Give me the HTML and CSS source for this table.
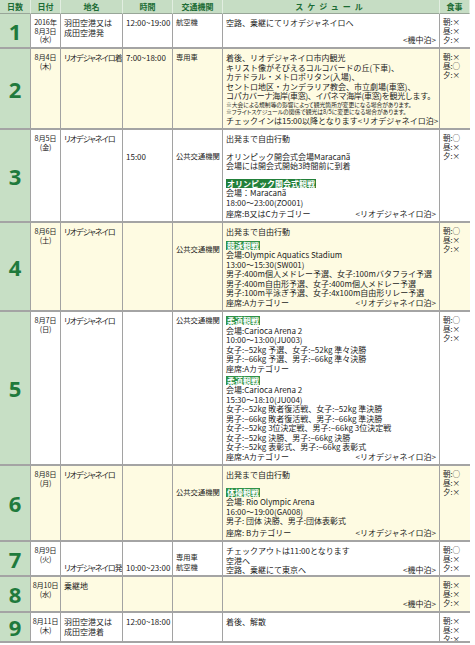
FILE: index.html
```html
<!DOCTYPE html>
<html lang="ja">
<head>
<meta charset="utf-8">
<title>スケジュール</title>
<link rel="stylesheet" href="styles.css">
</head>
<body>
<div class="sched">
  <div class="row head">
    <div class="c h">日数</div>
    <div class="c h">日付</div>
    <div class="c h">地名</div>
    <div class="c h">時間</div>
    <div class="c h">交通機関</div>
    <div class="c h sp">スケジュール</div>
    <div class="c h">食事</div>
  </div>

  <div class="row">
    <div class="c day">1</div>
    <div class="c date">2016年<br>8月3日<br>(水)</div>
    <div class="c place">羽田空港又は<br>成田空港発</div>
    <div class="c time">12:00~19:00</div>
    <div class="c trans">航空機</div>
    <div class="c plan">
      <div>空路、乗継にてリオデジャネイロへ</div>
      <div class="stay"><span></span><span>&lt;機中泊&gt;</span></div>
    </div>
    <div class="c meal">朝:×<br>昼:×<br>夕:×</div>
  </div>

  <div class="row alt">
    <div class="c day">2</div>
    <div class="c date">8月4日<br>(木)</div>
    <div class="c place"><span><span class="kana">リオデジャネイロ</span>着</span></div>
    <div class="c time">7:00~18:00</div>
    <div class="c trans">専用車</div>
    <div class="c plan">
      <div>着後、リオデジャネイロ市内観光</div>
      <div>キリスト像がそびえるコルコバードの丘(下車)、</div>
      <div>カテドラル・メトロポリタン(入場)、</div>
      <div>セントロ地区・カンデラリア教会、市立劇場(車窓)、</div>
      <div class="tight">コパカバーナ海岸(車窓)、イパネマ海岸(車窓)を観光します。</div>
      <div class="note">※大会による規制等の影響によって観光箇所が変更になる場合があります。</div>
      <div class="note">※フライトスケジュールの関係で観光は8/5に変更になる場合があります。</div>
      <div class="stay"><span>チェックインは15:00以降となります</span><span>&lt;リオデジャネイロ泊&gt;</span></div>
    </div>
    <div class="c meal">朝:×<br>昼:○<br>夕:×</div>
  </div>

  <div class="row">
    <div class="c day">3</div>
    <div class="c date">8月5日<br>(金)</div>
    <div class="c place"><span class="kana">リオデジャネイロ</span></div>
    <div class="c time at3">15:00</div>
    <div class="c trans at3">公共交通機関</div>
    <div class="c plan">
      <div>出発まで自由行動</div>
      <div class="gap"></div>
      <div>オリンピック開会式会場Maracanã</div>
      <div>会場には開会式開始3時間前に到着</div>
      <div class="gap"></div>
      <div><span class="tag">オリンピック開会式観戦</span></div>
      <div>会場：Maracanã</div>
      <div>18:00～23:00(ZO001)</div>
      <div class="stay"><span>座席:B又はCカテゴリー</span><span>&lt;リオデジャネイロ泊&gt;</span></div>
    </div>
    <div class="c meal">朝:○<br>昼:×<br>夕:×</div>
  </div>

  <div class="row alt">
    <div class="c day">4</div>
    <div class="c date">8月6日<br>(土)</div>
    <div class="c place"><span class="kana">リオデジャネイロ</span></div>
    <div class="c time"></div>
    <div class="c trans at3">公共交通機関</div>
    <div class="c plan">
      <div>出発まで自由行動</div>
      <div class="gap"></div>
      <div><span class="tag lt">競泳観戦</span></div>
      <div>会場:Olympic Aquatics Stadium</div>
      <div>13:00～15:30(SW001)</div>
      <div>男子:400m個人メドレー予選、女子:100mバタフライ予選</div>
      <div>男子:400m自由形予選、女子:400m個人メドレー予選</div>
      <div>男子:100m平泳ぎ予選、女子:4x100m自由形リレー予選</div>
      <div class="stay"><span>座席:Aカテゴリー</span><span>&lt;リオデジャネイロ泊&gt;</span></div>
    </div>
    <div class="c meal">朝:○<br>昼:×<br>夕:×</div>
  </div>

  <div class="row">
    <div class="c day">5</div>
    <div class="c date">8月7日<br>(日)</div>
    <div class="c place"><span class="kana">リオデジャネイロ</span></div>
    <div class="c time"></div>
    <div class="c trans">公共交通機関</div>
    <div class="c plan">
      <div><span class="tag lt">柔道観戦</span></div>
      <div>会場:Carioca Arena 2</div>
      <div>10:00～13:00(JU003)</div>
      <div>女子:−52kg 予選、女子:−52kg 準々決勝</div>
      <div>男子:−66kg 予選、男子:−66kg 準々決勝</div>
      <div>座席:Aカテゴリー</div>
      <div class="gap"></div>
      <div><span class="tag lt">柔道観戦</span></div>
      <div>会場:Carioca Arena 2</div>
      <div>15:30～18:10(JU004)</div>
      <div>女子:−52kg 敗者復活戦、女子:−52kg 準決勝</div>
      <div>男子:−66kg 敗者復活戦、男子:−66kg 準決勝</div>
      <div>女子:−52kg 3位決定戦、男子:−66kg 3位決定戦</div>
      <div>女子:−52kg 決勝、男子:−66kg 決勝</div>
      <div>女子:−52kg 表彰式、男子:−66kg 表彰式</div>
      <div class="stay"><span>座席:Aカテゴリー</span><span>&lt;リオデジャネイロ泊&gt;</span></div>
    </div>
    <div class="c meal">朝:○<br>昼:×<br>夕:×</div>
  </div>

  <div class="row alt">
    <div class="c day">6</div>
    <div class="c date">8月8日<br>(月)</div>
    <div class="c place"><span class="kana">リオデジャネイロ</span></div>
    <div class="c time"></div>
    <div class="c trans at3">公共交通機関</div>
    <div class="c plan">
      <div>出発まで自由行動</div>
      <div class="gap"></div>
      <div><span class="tag lt">体操観戦</span></div>
      <div>会場: Rio Olympic Arena</div>
      <div>16:00～19:00(GA008)</div>
      <div>男子: 団体 決勝、男子:団体表彰式</div>
      <div class="stay"><span>座席: Bカテゴリー</span><span>&lt;リオデジャネイロ泊&gt;</span></div>
    </div>
    <div class="c meal">朝:○<br>昼:×<br>夕:×</div>
  </div>

  <div class="row">
    <div class="c day">7</div>
    <div class="c date">8月9日<br>(火)</div>
    <div class="c place bottom"><span><span class="kana">リオデジャネイロ</span>発</span></div>
    <div class="c time bottom">10:00~23:00</div>
    <div class="c trans bottom">専用車<br>航空機</div>
    <div class="c plan">
      <div>チェックアウトは11:00となります</div>
      <div>空港へ</div>
      <div class="stay"><span>空路、乗継にて東京へ</span><span>&lt;機中泊&gt;</span></div>
    </div>
    <div class="c meal">朝:○<br>昼:×<br>夕:×</div>
  </div>

  <div class="row alt">
    <div class="c day">8</div>
    <div class="c date">8月10日<br>(水)</div>
    <div class="c place">乗継地</div>
    <div class="c time"></div>
    <div class="c trans"></div>
    <div class="c plan">
      <div class="stay"><span></span><span>&lt;機中泊&gt;</span></div>
    </div>
    <div class="c meal">朝:×<br>昼:×<br>夕:×</div>
  </div>

  <div class="row">
    <div class="c day">9</div>
    <div class="c date">8月11日<br>(木)</div>
    <div class="c place">羽田空港又は<br>成田空港着</div>
    <div class="c time">12:00~18:00</div>
    <div class="c trans"></div>
    <div class="c plan">
      <div>着後、解散</div>
    </div>
    <div class="c meal">朝:×<br>昼:×<br>夕:×</div>
  </div>
</div>
</body>
</html>
```

FILE: styles.css
```css
* {
  box-sizing: border-box;
  margin: 0;
  padding: 0;
}

body {
  margin: 0;
  background: #ffffff;
  font-family: "Noto Sans CJK JP", "Noto Sans", sans-serif;
  font-size: 8px;
  line-height: 9.5px;
  color: #1c1c1c;
}

.sched {
  display: grid;
  width: 470px;
  grid-template-columns: 31px 30px 62px 50px 50px 217px 30px;
  grid-template-rows: 14px 35px 81px 93px 89px 154px 76px 35px 36px 30px;
}

.row {
  display: contents;
}

.c {
  display: flex;
  flex-direction: column;
  padding: 4px 3px 3px;
  border-right: 1px solid #a2a2a2;
  border-bottom: 2px solid #a4a4a4;
  background: #ffffff;
  white-space: nowrap;
  overflow: hidden;
}

.row > .c:last-child {
  border-right: 0;
}

.row.alt > .c {
  background: #fefbe2;
}

.row.head > .c.h {
  background: #c6ddc4;
  color: #1c6c34;
  font-weight: bold;
  align-items: center;
  justify-content: center;
  padding: 0;
  border-right: 1px solid #e2eee1;
  border-bottom: 1px solid #98a698;
  font-size: 8px;
  line-height: 10px;
}

.h.sp {
  letter-spacing: 4px;
}

.row > .c.day {
  background: #c7dfc5;
  color: #1f7a3c;
  font-family: "Noto Sans", "Liberation Sans", sans-serif;
  font-weight: bold;
  font-size: 22px;
  line-height: 1;
  align-items: center;
  justify-content: center;
  padding: 0;
}

.date {
  align-items: center;
  text-align: center;
  font-size: 7.3px;
  line-height: 8.6px;
  letter-spacing: -0.2px;
  padding: 4px 0 3px;
}

.place {
  font-size: 8px;
  font-feature-settings: "palt" 1;
  padding-left: 3px;
  padding-right: 0;
}

.place .kana {
  letter-spacing: -0.9px;
}

.trans {
  font-size: 7.3px;
  padding-left: 3px;
  padding-right: 0;
}

.at3 {
  padding-top: 21.5px;
}

.bottom {
  justify-content: flex-end;
}

.plan .gap {
  height: 8px;
}

.plan .tight {
  letter-spacing: -0.3px;
}

.plan .note {
  font-size: 5.8px;
  line-height: 7px;
  font-feature-settings: "palt" 1;
}

.plan .stay {
  display: flex;
  justify-content: space-between;
  margin-top: auto;
}

.tag {
  display: inline-block;
  background: #22803a;
  color: #ffffff;
  font-weight: bold;
  padding: 0 1px;
  line-height: 9px;
}

.tag.lt {
  background: #2f9248;
}

.meal {
  font-size: 7.5px;
  line-height: 8.8px;
  padding-left: 3px;
  padding-top: 4px;
}
```
